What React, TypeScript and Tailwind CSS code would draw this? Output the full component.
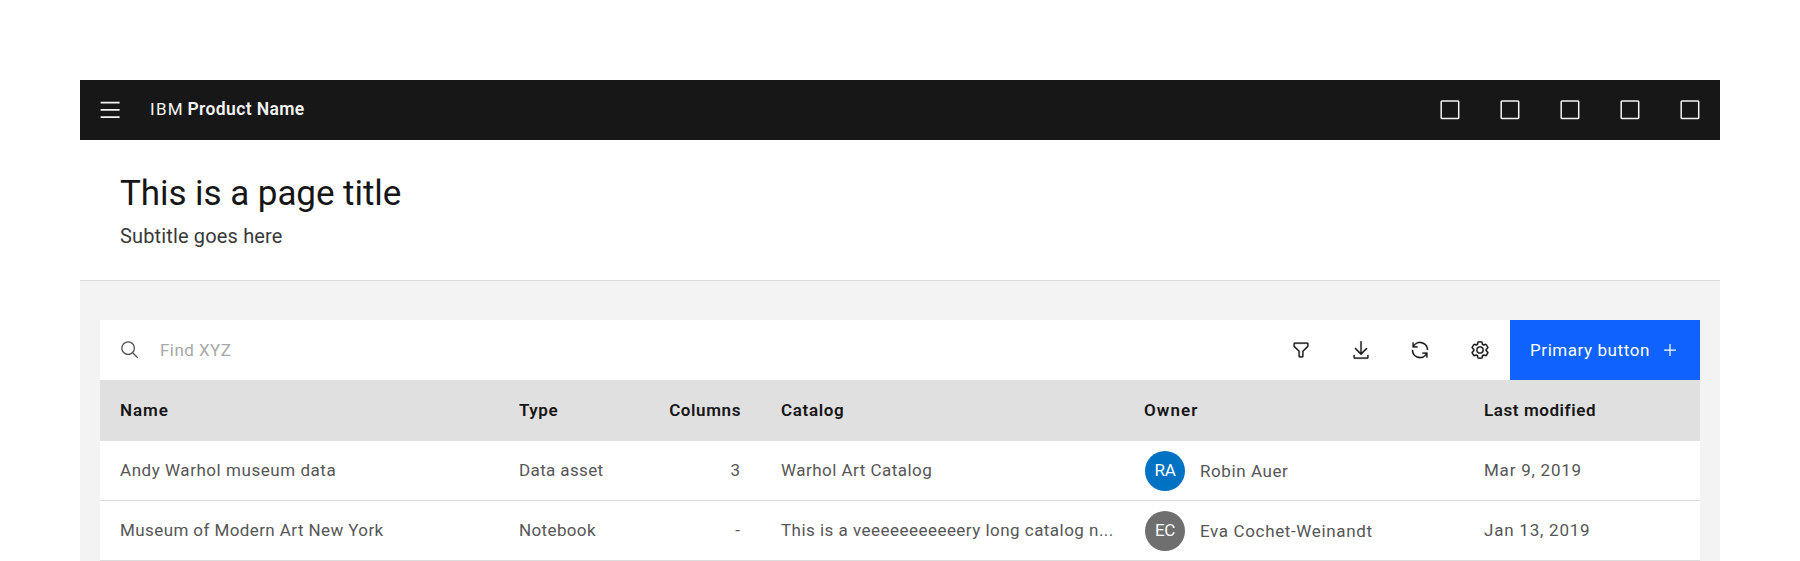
import type { ReactNode } from "react";

const columns =
  "grid grid-cols-[399px_121px_101px_402px_341px_1fr] pl-5";

function Icon({ children, className = "" }: { children: ReactNode; className?: string }) {
  return (
    <svg viewBox="0 0 32 32" className={`size-5 shrink-0 fill-current ${className}`} aria-hidden="true">
      {children}
    </svg>
  );
}

function ToolButton({ label, className = "", children }: { label: string; className?: string; children: ReactNode }) {
  return (
    <button aria-label={label} className={`flex size-15 items-center justify-center text-[#161616] ${className}`}>
      <Icon className="stroke-current stroke-[0.4]">{children}</Icon>
    </button>
  );
}

function Header() {
  return (
    <header className="flex h-15 items-center bg-[#171717] text-[#f4f4f4]">
      <div className="flex w-[70px] items-center pl-5">
        <Icon>
          <path d="M1 2.9h30.4v2.6H1zM1 14.5h30.4v2.6H1zM1 26.1h30.4v2.6H1z" />
        </Icon>
      </div>
      <div className="flex pb-0.5 text-[17px] leading-6">
        <span className="w-[37.5px] tracking-[1.3px]">IBM</span>
        <span className="text-[17.5px] font-semibold tracking-[0.38px]">Product Name</span>
      </div>
      <div className="ml-auto flex">
        {[0, 1, 2, 3, 4].map((i) => (
          <span key={i} className="flex size-15 items-center justify-center">
            <svg viewBox="0 0 20 20" className="size-5 fill-none stroke-[#f4f4f4] stroke-[1.5]">
              <rect x="1.2" y="1" width="17.5" height="17.5" rx="0.8" />
            </svg>
          </span>
        ))}
      </div>
    </header>
  );
}

function PageTitle() {
  return (
    <section className="h-[141px] border-b border-[#dcdcdc] bg-white px-10 pt-[31px]">
      <h1 className="text-[35px] leading-[46px] tracking-[-0.06px] text-[#161616]">This is a page title</h1>
      <p className="pt-1 text-[20px] leading-[30px] tracking-[0.15px] text-[#393939]">Subtitle goes here</p>
    </section>
  );
}

function Toolbar() {
  return (
    <div className="flex h-15 items-center bg-white">
      <div className="flex flex-1 items-center gap-5 pl-5">
        <Icon className="text-[#525252]">
          <path d="M29,27.5859l-7.5521-7.5521a11.0177,11.0177,0,1,0-1.4141,1.4141L27.5859,29ZM4,13a9,9,0,1,1,9,9A9.01,9.01,0,0,1,4,13Z" />
        </Icon>
        <span className="pt-0.5 text-[17px] tracking-[0.45px] text-[#a8a8a8]">Find XYZ</span>
      </div>
      <ToolButton label="Filter" className="pl-0.5">
        <path d="M18,28H14a2,2,0,0,1-2-2V18.41L4.59,11A2,2,0,0,1,4,9.59V6A2,2,0,0,1,6,4H26a2,2,0,0,1,2,2V9.59A2,2,0,0,1,27.41,11L20,18.41V26A2,2,0,0,1,18,28ZM6,6V9.59l8,8V26h4V17.59l8-8V6Z" />
      </ToolButton>
      <ToolButton label="Download" className="pl-0.5">
        <path d="M26,24v4H6V24H4v4a2,2,0,0,0,2,2H26a2,2,0,0,0,2-2V24ZM26,14l-1.41-1.41L17,20.17V2H15V20.17L7.41,12.59,6,14,16,24,26,14Z" />
      </ToolButton>
      <ToolButton label="Refresh">
        <path d="M12,10H6.78A11,11,0,0,1,27,16h2A13,13,0,0,0,6,7.68V4H4v8h8Z" />
        <path d="M20,22h5.22A11,11,0,0,1,5,16H3a13,13,0,0,0,23,8.32V28h2V20H20Z" />
      </ToolButton>
      <ToolButton label="Settings">
        <path d="M27,16.76c0-.25,0-.5,0-.76s0-.51,0-.77l1.92-1.68A2,2,0,0,0,29.3,11L26.94,7a2,2,0,0,0-1.73-1,2,2,0,0,0-.64.1l-2.43.82a11.35,11.35,0,0,0-1.31-.75l-.51-2.52a2,2,0,0,0-2-1.61H13.64a2,2,0,0,0-2,1.61l-.51,2.52a11.48,11.48,0,0,0-1.32.75L7.43,6.06A2,2,0,0,0,6.79,6,2,2,0,0,0,5.06,7L2.7,11a2,2,0,0,0,.41,2.51L5,15.24c0,.25,0,.5,0,.76s0,.51,0,.77L3.11,18.45A2,2,0,0,0,2.7,21L5.06,25a2,2,0,0,0,1.73,1,2,2,0,0,0,.64-.1l2.43-.82a11.35,11.35,0,0,0,1.31.75l.51,2.52a2,2,0,0,0,2,1.61h4.72a2,2,0,0,0,2-1.61l.51-2.52a11.48,11.48,0,0,0,1.32-.75l2.42.82a2,2,0,0,0,.64.1,2,2,0,0,0,1.73-1L29.3,21a2,2,0,0,0-.41-2.51ZM25.21,24l-3.43-1.16a8.86,8.86,0,0,1-2.71,1.57L18.36,28H13.64l-.71-3.55a9.36,9.36,0,0,1-2.7-1.57L6.79,24,4.43,20l2.72-2.4a8.9,8.9,0,0,1,0-3.13L4.43,12,6.79,8l3.43,1.16a8.86,8.86,0,0,1,2.71-1.57L13.64,4h4.72l.71,3.55a9.36,9.36,0,0,1,2.7,1.57L25.21,8,27.57,12l-2.72,2.4a8.9,8.9,0,0,1,0,3.13L27.57,20Z" />
        <path d="M16,22a6,6,0,1,1,6-6A5.94,5.94,0,0,1,16,22Zm0-10a3.91,3.91,0,0,0-4,4,3.91,3.91,0,0,0,4,4,3.91,3.91,0,0,0,4-4A3.91,3.91,0,0,0,16,12Z" />
      </ToolButton>
      <button className="flex h-15 w-[190px] items-center justify-between bg-[#0f62fe] px-5 text-[17px] tracking-[0.57px] text-white">
        <span className="pt-0.5">Primary button</span>
        <Icon>
          <path d="M17,15V6.5H15V15H6.5v2H15v8.5h2V17h8.5V15Z" />
        </Icon>
      </button>
    </div>
  );
}

const rows = [
  {
    name: "Andy Warhol museum data", nameTracking: "tracking-[0.54px]",
    type: "Data asset", count: "3",
    catalog: "Warhol Art Catalog",
    initials: "RA", avatar: "bg-[#0072c3]",
    owner: "Robin Auer", ownerTracking: "tracking-[0.57px]",
    modified: "Mar 9, 2019",
  },
  {
    name: "Museum of Modern Art New York", nameTracking: "tracking-[0.41px]",
    type: "Notebook", count: "-",
    catalog: "This is a veeeeeeeeeeery long catalog n...",
    initials: "EC", avatar: "bg-[#6f6f6f]",
    owner: "Eva Cochet-Weinandt", ownerTracking: "tracking-[0.64px]",
    modified: "Jan 13, 2019",
  },
];

function DataTable() {
  return (
    <div className="text-[17px] whitespace-nowrap">
      <div className={`${columns} h-[61px] items-center bg-[#e0e0e0] pt-px font-semibold text-[#161616]`}>
        <span className="tracking-[0.9px]">Name</span>
        <span className="tracking-[0.56px]">Type</span>
        <span className="text-right tracking-[0.6px]">Columns</span>
        <span className="pl-10 tracking-[0.65px]">Catalog</span>
        <span className="pl-px tracking-[1.1px]">Owner</span>
        <span className="tracking-[0.58px]">Last modified</span>
      </div>
      {rows.map((row) => (
        <div
          key={row.name}
          className={`${columns} h-15 items-center border-b border-[#dcdcdc] bg-white text-[#565656]`}
        >
          <span className={row.nameTracking}>{row.name}</span>
          <span className="tracking-[0.37px]">{row.type}</span>
          <span className="pr-px text-right">{row.count}</span>
          <span className="pl-10 tracking-[0.47px]">{row.catalog}</span>
          <span className="flex items-center gap-[15px] pt-px pl-0.5">
            <span className={`flex size-10 items-center justify-center rounded-full text-white tracking-[-0.4px] ${row.avatar}`}>
              {row.initials}
            </span>
            <span className={`pt-px ${row.ownerTracking}`}>{row.owner}</span>
          </span>
          <span className="tracking-[0.77px]">{row.modified}</span>
        </div>
      ))}
    </div>
  );
}

export default function App() {
  return (
    <div className="h-[561px] overflow-hidden bg-white px-20 pt-20 font-['Roboto','Noto_Sans',sans-serif]">
      <Header />
      <PageTitle />
      <main className="h-[280px] bg-[#f3f3f3] px-5 pt-[39px]">
        <Toolbar />
        <DataTable />
      </main>
    </div>
  );
}
